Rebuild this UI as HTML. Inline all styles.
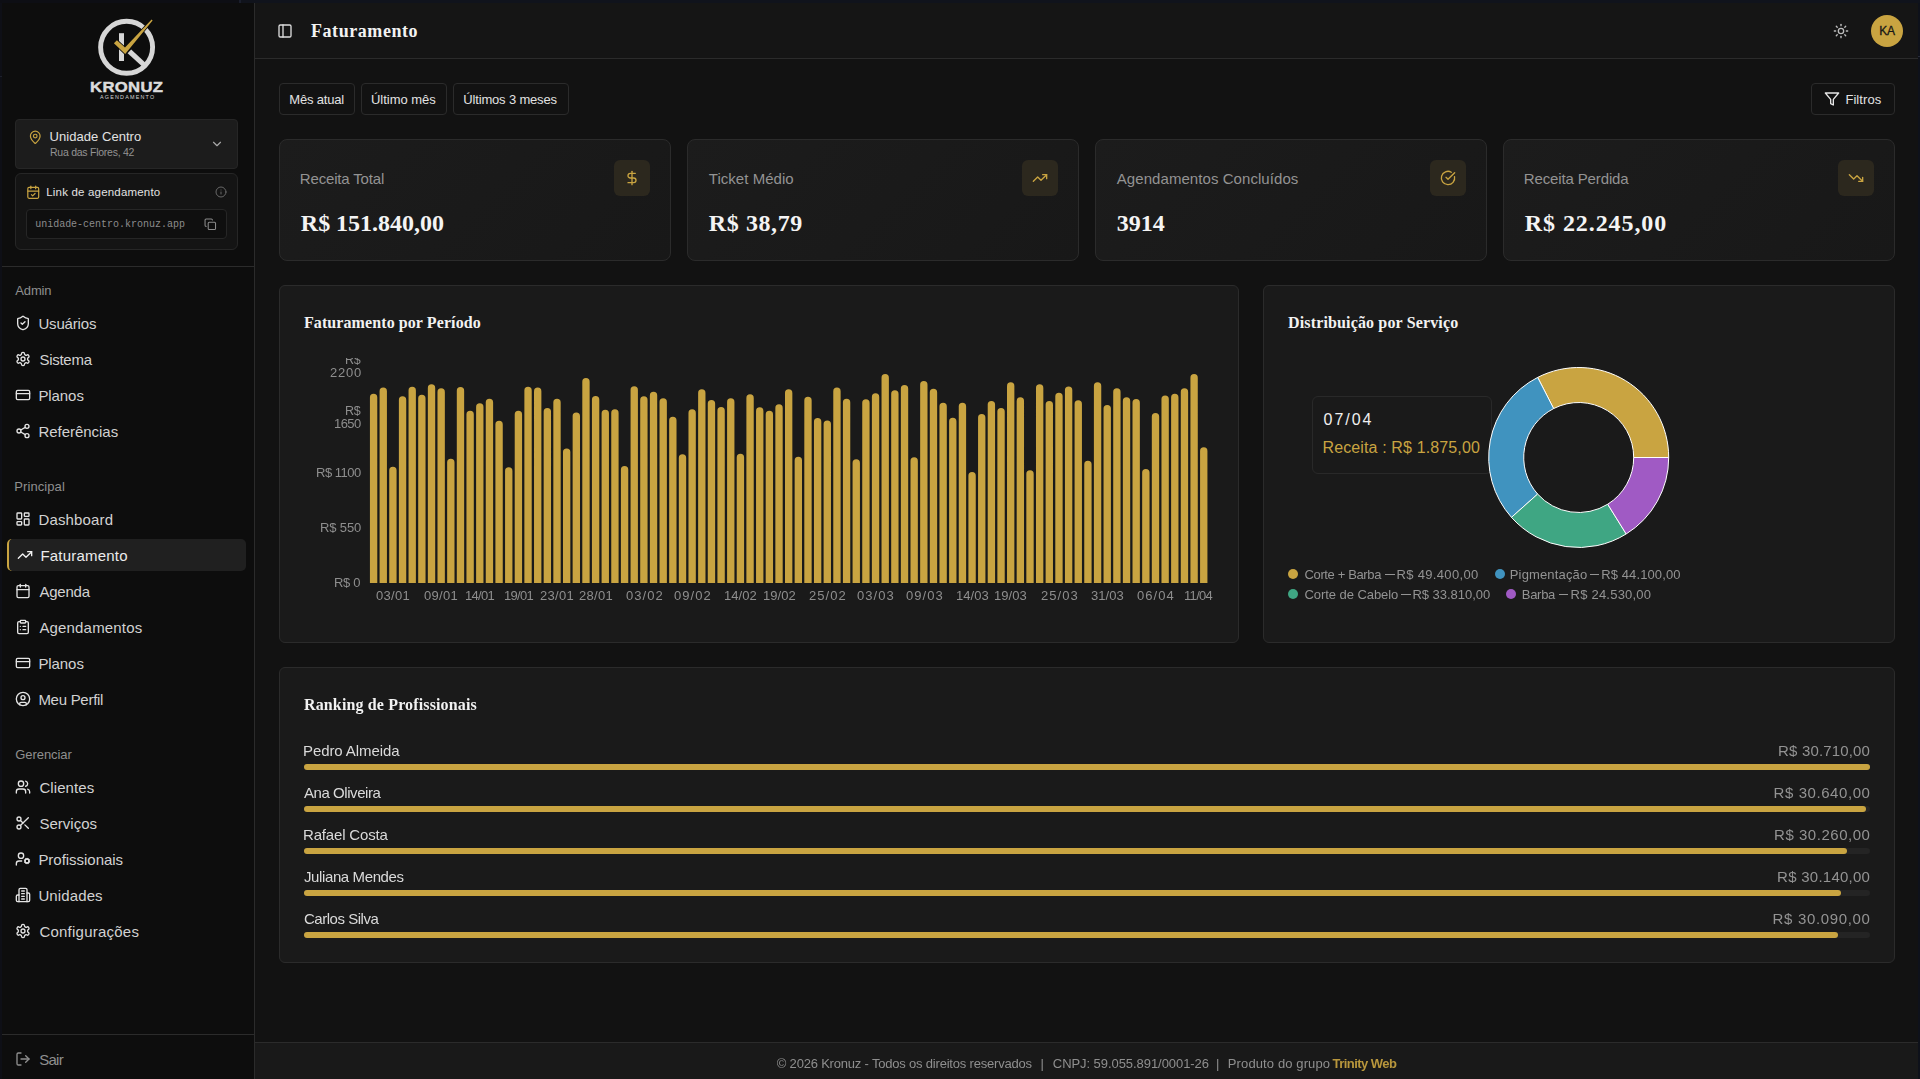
<!DOCTYPE html>
<html lang="pt-BR"><head><meta charset="utf-8"><title>Faturamento - Kronuz</title>
<style>
html,body{margin:0;padding:0;background:#0e0f16;}
body{width:1920px;height:1079px;position:relative;overflow:hidden;font-family:'Liberation Sans', sans-serif;}
.b{position:absolute;box-sizing:border-box;}
.t{position:absolute;white-space:pre;}
.i{position:absolute;overflow:visible;}
</style></head><body>
<div class="b" style="left:0px;top:0px;width:1920px;height:1079px;background:#0e0f16;"></div>
<div class="b" style="left:0px;top:0px;width:239px;height:3px;background:#0d0e14;"></div>
<div class="b" style="left:239px;top:0px;width:2px;height:3px;background:#1a1e2c;"></div>
<div class="b" style="left:241px;top:0px;width:1679px;height:3px;background:#10131c;"></div>
<div class="b" style="left:1918px;top:3px;width:2px;height:1076px;background:#0e111a;"></div>
<div class="b" style="left:2px;top:3px;width:252px;height:1076px;background:#0d0d0d;"></div>
<div class="b" style="left:254px;top:3px;width:1px;height:1076px;background:#2b2b2b;"></div>
<div class="b" style="left:255px;top:3px;width:1663px;height:1076px;background:#121212;"></div>
<div class="b" style="left:255px;top:3px;width:1663px;height:55px;background:#151515;"></div>
<div class="b" style="left:255px;top:58px;width:1663px;height:1px;background:#2b2b2b;"></div>
<div class="b" style="left:255px;top:1042px;width:1663px;height:1px;background:#2b2b2b;"></div>
<div class="b" style="left:255px;top:1043px;width:1663px;height:36px;background:#191919;"></div>
<div class="b" style="left:0px;top:76px;width:2px;height:1px;background:#1d202b;"></div>
<div class="b" style="left:1918px;top:56px;width:2px;height:1px;background:#272b3a;"></div>
<svg class="i" style="left:80px;top:10px" width="100" height="100" viewBox="80 10 100 100">
<circle cx="126.6" cy="47.3" r="26" fill="none" stroke="#d6d6d6" stroke-width="4.9"/>
<rect x="119" y="33.2" width="5" height="27.8" fill="#d6d6d6"/>
<path d="M127.6 53.2 L131.2 49.6 L146 63.2 L142.2 66.6 Z" fill="#d6d6d6"/>
<path d="M113.9 43.3 L116.9 40.2 L125 47.6 L151.6 19.6 L152.6 20.4 L125.2 54 Z" fill="#c9a441" stroke="#0d0d0d" stroke-width="1.6" paint-order="stroke" stroke-linejoin="miter"/>
</svg>
<div class="t" style="left:89.90px;top:79.77px;font:700 14.8px/14.8px 'Liberation Sans', sans-serif;color:#dcdcdc;letter-spacing:0.300px;-webkit-text-stroke:0.45px #dcdcdc;transform-origin:0 0;transform:scaleX(1.1274);">KRONUZ</div>
<div class="t" style="left:100.00px;top:94.53px;font:400 5.4px/5.4px 'Liberation Sans', sans-serif;color:#d4d4d4;letter-spacing:1.206px;">AGENDAMENTO</div>
<div class="b" style="left:15px;top:119px;width:223px;height:50px;background:#1c1c1c;border:1px solid #262626;border-radius:4px;"></div>
<svg class="i" style="left:27.55px;top:129.95px" width="14.5" height="14.5" viewBox="0 0 24 24" fill="none" stroke="#c9a441" stroke-width="2" stroke-linecap="round" stroke-linejoin="round"><path d="M20 10c0 4.993-5.539 10.193-7.399 11.799a1 1 0 0 1-1.202 0C9.539 20.193 4 14.993 4 10a8 8 0 0 1 16 0"/><circle cx="12" cy="10" r="3"/></svg>
<div class="t" style="left:49.60px;top:130.00px;font:400 13px/13px 'Liberation Sans', sans-serif;color:#e2e2e2;letter-spacing:0.044px;">Unidade Centro</div>
<div class="t" style="left:50.00px;top:147.11px;font:400 10.5px/10.5px 'Liberation Sans', sans-serif;color:#939393;letter-spacing:-0.251px;">Rua das Flores, 42</div>
<svg class="i" style="left:210.00px;top:137.00px" width="14" height="14" viewBox="0 0 24 24" fill="none" stroke="#a8a8a8" stroke-width="2" stroke-linecap="round" stroke-linejoin="round"><path d="m6 9 6 6 6-6"/></svg>
<div class="b" style="left:15px;top:173px;width:223px;height:77px;background:#141414;border:1px solid #262626;border-radius:6px;"></div>
<svg class="i" style="left:25.95px;top:185.05px" width="14.5" height="14.5" viewBox="0 0 24 24" fill="none" stroke="#c9a441" stroke-width="2" stroke-linecap="round" stroke-linejoin="round"><path d="M8 2v4"/><path d="M16 2v4"/><rect width="18" height="18" x="3" y="4" rx="2"/><path d="M3 10h18"/><path d="m9 16 2 2 4-4"/></svg>
<div class="t" style="left:46.30px;top:187.27px;font:400 11.5px/11.5px 'Liberation Sans', sans-serif;color:#e2e2e2;letter-spacing:0.182px;">Link de agendamento</div>
<svg class="i" style="left:215.00px;top:186.20px" width="12" height="12" viewBox="0 0 24 24" fill="none" stroke="#686868" stroke-width="2" stroke-linecap="round" stroke-linejoin="round"><circle cx="12" cy="12" r="10"/><path d="M12 16v-4"/><path d="M12 8h.01"/></svg>
<div class="b" style="left:26px;top:209px;width:201px;height:30px;background:#0f0f0f;border:1px solid #262626;border-radius:4px;"></div>
<div class="t" style="left:35.20px;top:219.74px;font:400 10px/10px 'Liberation Mono', monospace;color:#8c8c8c;letter-spacing:-0.013px;">unidade-centro.kronuz.app</div>
<svg class="i" style="left:203.90px;top:217.80px" width="12.6" height="12.6" viewBox="0 0 24 24" fill="none" stroke="#8c8c8c" stroke-width="2" stroke-linecap="round" stroke-linejoin="round"><rect width="14" height="14" x="8" y="8" rx="2" ry="2"/><path d="M4 16c-1.1 0-2-.9-2-2V4c0-1.1.9-2 2-2h10c1.1 0 2 .9 2 2"/></svg>
<div class="b" style="left:2px;top:266px;width:252px;height:1px;background:#2b2b2b;"></div>
<div class="t" style="left:15.30px;top:284.00px;font:400 13px/13px 'Liberation Sans', sans-serif;color:#8f8f8f;letter-spacing:-0.155px;">Admin</div>
<svg class="i" style="left:15.00px;top:315.00px" width="16" height="16" viewBox="0 0 24 24" fill="none" stroke="#e4e4e4" stroke-width="2" stroke-linecap="round" stroke-linejoin="round"><path d="M20 13c0 5-3.5 7.5-7.66 8.95a1 1 0 0 1-.67-.01C7.5 20.5 4 18 4 13V6a1 1 0 0 1 1-1c2 0 4.5-1.2 6.24-2.72a1.17 1.17 0 0 1 1.52 0C14.51 3.81 17 5 19 5a1 1 0 0 1 1 1z"/><path d="m9 12 2 2 4-4"/></svg>
<div class="t" style="left:38.40px;top:316.05px;font:400 15px/15px 'Liberation Sans', sans-serif;color:#d2d2d2;letter-spacing:-0.170px;">Usuários</div>
<svg class="i" style="left:15.00px;top:351.00px" width="16" height="16" viewBox="0 0 24 24" fill="none" stroke="#e4e4e4" stroke-width="2" stroke-linecap="round" stroke-linejoin="round"><path d="M12.22 2h-.44a2 2 0 0 0-2 2v.18a2 2 0 0 1-1 1.73l-.43.25a2 2 0 0 1-2 0l-.15-.08a2 2 0 0 0-2.73.73l-.22.38a2 2 0 0 0 .73 2.73l.15.1a2 2 0 0 1 1 1.72v.51a2 2 0 0 1-1 1.74l-.15.09a2 2 0 0 0-.73 2.73l.22.38a2 2 0 0 0 2.73.73l.15-.08a2 2 0 0 1 2 0l.43.25a2 2 0 0 1 1 1.73V20a2 2 0 0 0 2 2h.44a2 2 0 0 0 2-2v-.18a2 2 0 0 1 1-1.73l.43-.25a2 2 0 0 1 2 0l.15.08a2 2 0 0 0 2.73-.73l.22-.39a2 2 0 0 0-.73-2.73l-.15-.08a2 2 0 0 1-1-1.74v-.5a2 2 0 0 1 1-1.74l.15-.09a2 2 0 0 0 .73-2.73l-.22-.38a2 2 0 0 0-2.73-.73l-.15.08a2 2 0 0 1-2 0l-.43-.25a2 2 0 0 1-1-1.73V4a2 2 0 0 0-2-2z"/><circle cx="12" cy="12" r="3"/></svg>
<div class="t" style="left:39.40px;top:352.05px;font:400 15px/15px 'Liberation Sans', sans-serif;color:#d2d2d2;letter-spacing:-0.257px;">Sistema</div>
<svg class="i" style="left:15.00px;top:387.00px" width="16" height="16" viewBox="0 0 24 24" fill="none" stroke="#e4e4e4" stroke-width="2" stroke-linecap="round" stroke-linejoin="round"><rect width="20" height="14" x="2" y="5" rx="2"/><line x1="2" x2="22" y1="10" y2="10"/></svg>
<div class="t" style="left:38.40px;top:388.05px;font:400 15px/15px 'Liberation Sans', sans-serif;color:#d2d2d2;letter-spacing:-0.073px;">Planos</div>
<svg class="i" style="left:15.00px;top:423.00px" width="16" height="16" viewBox="0 0 24 24" fill="none" stroke="#e4e4e4" stroke-width="2" stroke-linecap="round" stroke-linejoin="round"><circle cx="18" cy="5" r="3"/><circle cx="6" cy="12" r="3"/><circle cx="18" cy="19" r="3"/><line x1="8.59" x2="15.42" y1="13.51" y2="17.49"/><line x1="15.41" x2="8.59" y1="6.51" y2="10.49"/></svg>
<div class="t" style="left:38.40px;top:424.05px;font:400 15px/15px 'Liberation Sans', sans-serif;color:#d2d2d2;letter-spacing:-0.024px;">Referências</div>
<div class="t" style="left:14.30px;top:480.00px;font:400 13px/13px 'Liberation Sans', sans-serif;color:#8f8f8f;letter-spacing:0.079px;">Principal</div>
<svg class="i" style="left:15.00px;top:511.00px" width="16" height="16" viewBox="0 0 24 24" fill="none" stroke="#e4e4e4" stroke-width="2" stroke-linecap="round" stroke-linejoin="round"><rect width="7" height="9" x="3" y="3" rx="1"/><rect width="7" height="5" x="14" y="3" rx="1"/><rect width="7" height="9" x="14" y="12" rx="1"/><rect width="7" height="5" x="3" y="16" rx="1"/></svg>
<div class="t" style="left:38.40px;top:512.05px;font:400 15px/15px 'Liberation Sans', sans-serif;color:#d2d2d2;letter-spacing:0.158px;">Dashboard</div>
<div class="b" style="left:7px;top:539.0px;width:239px;height:32.0px;background:#202020;border-radius:5px;border-left:2px solid #c9a441;"></div>
<svg class="i" style="left:17.00px;top:547.00px" width="16" height="16" viewBox="0 0 24 24" fill="none" stroke="#f2f2f2" stroke-width="2" stroke-linecap="round" stroke-linejoin="round"><polyline points="22 7 13.5 15.5 8.5 10.5 2 17"/><polyline points="16 7 22 7 22 13"/></svg>
<div class="t" style="left:40.40px;top:548.05px;font:400 15px/15px 'Liberation Sans', sans-serif;color:#ececec;letter-spacing:0.210px;">Faturamento</div>
<svg class="i" style="left:15.00px;top:583.00px" width="16" height="16" viewBox="0 0 24 24" fill="none" stroke="#e4e4e4" stroke-width="2" stroke-linecap="round" stroke-linejoin="round"><path d="M8 2v4"/><path d="M16 2v4"/><rect width="18" height="18" x="3" y="4" rx="2"/><path d="M3 10h18"/></svg>
<div class="t" style="left:39.40px;top:584.05px;font:400 15px/15px 'Liberation Sans', sans-serif;color:#d2d2d2;letter-spacing:-0.215px;">Agenda</div>
<svg class="i" style="left:15.00px;top:619.00px" width="16" height="16" viewBox="0 0 24 24" fill="none" stroke="#e4e4e4" stroke-width="2" stroke-linecap="round" stroke-linejoin="round"><rect width="8" height="4" x="8" y="2" rx="1" ry="1"/><path d="M16 4h2a2 2 0 0 1 2 2v14a2 2 0 0 1-2 2H6a2 2 0 0 1-2-2V6a2 2 0 0 1 2-2h2"/><path d="M12 11h4"/><path d="M12 16h4"/><path d="M8 11h.01"/><path d="M8 16h.01"/></svg>
<div class="t" style="left:39.40px;top:620.05px;font:400 15px/15px 'Liberation Sans', sans-serif;color:#d2d2d2;letter-spacing:0.172px;">Agendamentos</div>
<svg class="i" style="left:15.00px;top:655.00px" width="16" height="16" viewBox="0 0 24 24" fill="none" stroke="#e4e4e4" stroke-width="2" stroke-linecap="round" stroke-linejoin="round"><rect width="20" height="14" x="2" y="5" rx="2"/><line x1="2" x2="22" y1="10" y2="10"/></svg>
<div class="t" style="left:38.40px;top:656.05px;font:400 15px/15px 'Liberation Sans', sans-serif;color:#d2d2d2;letter-spacing:-0.073px;">Planos</div>
<svg class="i" style="left:15.00px;top:691.00px" width="16" height="16" viewBox="0 0 24 24" fill="none" stroke="#e4e4e4" stroke-width="2" stroke-linecap="round" stroke-linejoin="round"><circle cx="12" cy="12" r="10"/><circle cx="12" cy="10" r="3"/><path d="M7 20.662V19a2 2 0 0 1 2-2h6a2 2 0 0 1 2 2v1.662"/></svg>
<div class="t" style="left:38.40px;top:692.05px;font:400 15px/15px 'Liberation Sans', sans-serif;color:#d2d2d2;letter-spacing:-0.277px;">Meu Perfil</div>
<div class="t" style="left:15.30px;top:748.00px;font:400 13px/13px 'Liberation Sans', sans-serif;color:#8f8f8f;letter-spacing:-0.069px;">Gerenciar</div>
<svg class="i" style="left:15.00px;top:779.00px" width="16" height="16" viewBox="0 0 24 24" fill="none" stroke="#e4e4e4" stroke-width="2" stroke-linecap="round" stroke-linejoin="round"><path d="M16 21v-2a4 4 0 0 0-4-4H6a4 4 0 0 0-4 4v2"/><circle cx="9" cy="7" r="4"/><path d="M22 21v-2a4 4 0 0 0-3-3.87"/><path d="M16 3.13a4 4 0 0 1 0 7.75"/></svg>
<div class="t" style="left:39.40px;top:780.05px;font:400 15px/15px 'Liberation Sans', sans-serif;color:#d2d2d2;letter-spacing:0.087px;">Clientes</div>
<svg class="i" style="left:15.00px;top:815.00px" width="16" height="16" viewBox="0 0 24 24" fill="none" stroke="#e4e4e4" stroke-width="2" stroke-linecap="round" stroke-linejoin="round"><circle cx="6" cy="6" r="3"/><path d="M8.12 8.12 12 12"/><path d="M20 4 8.12 15.88"/><circle cx="6" cy="18" r="3"/><path d="M14.8 14.8 20 20"/></svg>
<div class="t" style="left:39.40px;top:816.05px;font:400 15px/15px 'Liberation Sans', sans-serif;color:#d2d2d2;letter-spacing:0.012px;">Serviços</div>
<svg class="i" style="left:15.00px;top:851.00px" width="16" height="16" viewBox="0 0 24 24" fill="none" stroke="#e4e4e4" stroke-width="2" stroke-linecap="round" stroke-linejoin="round"><circle cx="18" cy="15" r="3"/><circle cx="9" cy="7" r="4"/><path d="M10 15H6a4 4 0 0 0-4 4v2"/><path d="m21.7 16.4-.9-.3"/><path d="m15.2 13.9-.9-.3"/><path d="m16.6 18.7.3-.9"/><path d="m19.1 12.2.3-.9"/><path d="m19.6 18.7-.4-1"/><path d="m16.8 12.3-.4-1"/><path d="m14.3 16.6 1-.4"/><path d="m20.7 13.8 1-.4"/></svg>
<div class="t" style="left:38.40px;top:852.05px;font:400 15px/15px 'Liberation Sans', sans-serif;color:#d2d2d2;letter-spacing:-0.028px;">Profissionais</div>
<svg class="i" style="left:15.00px;top:887.00px" width="16" height="16" viewBox="0 0 24 24" fill="none" stroke="#e4e4e4" stroke-width="2" stroke-linecap="round" stroke-linejoin="round"><path d="M6 22V4a2 2 0 0 1 2-2h8a2 2 0 0 1 2 2v18Z"/><path d="M6 12H4a2 2 0 0 0-2 2v6a2 2 0 0 0 2 2h2"/><path d="M18 9h2a2 2 0 0 1 2 2v9a2 2 0 0 1-2 2h-2"/><path d="M10 6h4"/><path d="M10 10h4"/><path d="M10 14h4"/><path d="M10 18h4"/></svg>
<div class="t" style="left:38.40px;top:888.05px;font:400 15px/15px 'Liberation Sans', sans-serif;color:#d2d2d2;letter-spacing:0.118px;">Unidades</div>
<svg class="i" style="left:15.00px;top:923.00px" width="16" height="16" viewBox="0 0 24 24" fill="none" stroke="#e4e4e4" stroke-width="2" stroke-linecap="round" stroke-linejoin="round"><path d="M12.22 2h-.44a2 2 0 0 0-2 2v.18a2 2 0 0 1-1 1.73l-.43.25a2 2 0 0 1-2 0l-.15-.08a2 2 0 0 0-2.73.73l-.22.38a2 2 0 0 0 .73 2.73l.15.1a2 2 0 0 1 1 1.72v.51a2 2 0 0 1-1 1.74l-.15.09a2 2 0 0 0-.73 2.73l.22.38a2 2 0 0 0 2.73.73l.15-.08a2 2 0 0 1 2 0l.43.25a2 2 0 0 1 1 1.73V20a2 2 0 0 0 2 2h.44a2 2 0 0 0 2-2v-.18a2 2 0 0 1 1-1.73l.43-.25a2 2 0 0 1 2 0l.15.08a2 2 0 0 0 2.73-.73l.22-.39a2 2 0 0 0-.73-2.73l-.15-.08a2 2 0 0 1-1-1.74v-.5a2 2 0 0 1 1-1.74l.15-.09a2 2 0 0 0 .73-2.73l-.22-.38a2 2 0 0 0-2.73-.73l-.15.08a2 2 0 0 1-2 0l-.43-.25a2 2 0 0 1-1-1.73V4a2 2 0 0 0-2-2z"/><circle cx="12" cy="12" r="3"/></svg>
<div class="t" style="left:39.40px;top:924.05px;font:400 15px/15px 'Liberation Sans', sans-serif;color:#d2d2d2;letter-spacing:0.231px;">Configurações</div>
<div class="b" style="left:2px;top:1034px;width:252px;height:1px;background:#2b2b2b;"></div>
<svg class="i" style="left:15.00px;top:1051.00px" width="16" height="16" viewBox="0 0 24 24" fill="none" stroke="#8f8f8f" stroke-width="2" stroke-linecap="round" stroke-linejoin="round"><path d="M9 21H5a2 2 0 0 1-2-2V5a2 2 0 0 1 2-2h4"/><polyline points="16 17 21 12 16 7"/><line x1="21" x2="9" y1="12" y2="12"/></svg>
<div class="t" style="left:39.30px;top:1051.60px;font:400 15px/15px 'Liberation Sans', sans-serif;color:#8f8f8f;letter-spacing:-0.760px;">Sair</div>
<svg class="i" style="left:277.00px;top:23.00px" width="16" height="16" viewBox="0 0 24 24" fill="none" stroke="#dddddd" stroke-width="2" stroke-linecap="round" stroke-linejoin="round"><rect width="18" height="18" x="3" y="3" rx="2"/><path d="M9 3v18"/></svg>
<div class="t" style="left:311.00px;top:21.72px;font:700 18px/18px 'Liberation Serif', serif;color:#f2f2f2;letter-spacing:0.562px;">Faturamento</div>
<svg class="i" style="left:1833.00px;top:23.00px" width="16" height="16" viewBox="0 0 24 24" fill="none" stroke="#bdbdbd" stroke-width="2" stroke-linecap="round" stroke-linejoin="round"><circle cx="12" cy="12" r="4"/><path d="M12 2v2"/><path d="M12 20v2"/><path d="m4.93 4.93 1.41 1.41"/><path d="m17.66 17.66 1.41 1.41"/><path d="M2 12h2"/><path d="M20 12h2"/><path d="m6.34 17.66-1.41 1.41"/><path d="m19.07 4.93-1.41 1.41"/></svg>
<div class="b" style="left:1871px;top:15px;width:32px;height:32px;border-radius:50%;background:#c9a441"></div>
<div class="t" style="left:1879.20px;top:24.74px;font:400 12px/12px 'Liberation Sans', sans-serif;color:#161616;letter-spacing:-0.204px;-webkit-text-stroke:0.3px #161616;">KA</div>
<div class="b" style="left:279px;top:83px;width:76px;height:32px;background:#121212;border:1px solid #2b2b2b;border-radius:4px;"></div>
<div class="t" style="left:289.30px;top:93.00px;font:400 13px/13px 'Liberation Sans', sans-serif;color:#e2e2e2;letter-spacing:-0.184px;">Mês atual</div>
<div class="b" style="left:361px;top:83px;width:86px;height:32px;background:#121212;border:1px solid #2b2b2b;border-radius:4px;"></div>
<div class="t" style="left:371.00px;top:93.00px;font:400 13px/13px 'Liberation Sans', sans-serif;color:#e2e2e2;letter-spacing:-0.023px;">Último mês</div>
<div class="b" style="left:453px;top:83px;width:116px;height:32px;background:#121212;border:1px solid #2b2b2b;border-radius:4px;"></div>
<div class="t" style="left:463.30px;top:93.00px;font:400 13px/13px 'Liberation Sans', sans-serif;color:#e2e2e2;letter-spacing:-0.170px;">Últimos 3 meses</div>
<div class="b" style="left:1811px;top:83px;width:84px;height:32px;background:#121212;border:1px solid #2b2b2b;border-radius:4px;"></div>
<svg class="i" style="left:1824.00px;top:91.00px" width="16" height="16" viewBox="0 0 24 24" fill="none" stroke="#e8e8e8" stroke-width="2" stroke-linecap="round" stroke-linejoin="round"><polygon points="22 3 2 3 10 12.46 10 19 14 21 14 12.46 22 3"/></svg>
<div class="t" style="left:1845.40px;top:93.00px;font:400 13px/13px 'Liberation Sans', sans-serif;color:#e2e2e2;letter-spacing:0.069px;">Filtros</div>
<div class="b" style="left:279px;top:139px;width:392px;height:122px;background:linear-gradient(135deg,#1c1c1c 0%,#181818 100%);border:1px solid #2b2b2b;border-radius:8px;"></div>
<div class="t" style="left:299.80px;top:170.80px;font:400 15px/15px 'Liberation Sans', sans-serif;color:#939393;letter-spacing:-0.165px;">Receita Total</div>
<div class="t" style="left:300.80px;top:211.20px;font:700 24px/24px 'Liberation Serif', serif;color:#f4f4f4;letter-spacing:-0.003px;">R$ 151.840,00</div>
<div class="b" style="left:614px;top:160px;width:36px;height:36px;background:#2c281e;border-radius:6px;"></div>
<svg class="i" style="left:624.00px;top:170.00px" width="16" height="16" viewBox="0 0 24 24" fill="none" stroke="#c9a441" stroke-width="2" stroke-linecap="round" stroke-linejoin="round"><line x1="12" x2="12" y1="2" y2="22"/><path d="M17 5H9.5a3.5 3.5 0 0 0 0 7h5a3.5 3.5 0 0 1 0 7H6"/></svg>
<div class="b" style="left:687px;top:139px;width:392px;height:122px;background:linear-gradient(135deg,#1c1c1c 0%,#181818 100%);border:1px solid #2b2b2b;border-radius:8px;"></div>
<div class="t" style="left:708.80px;top:170.80px;font:400 15px/15px 'Liberation Sans', sans-serif;color:#939393;letter-spacing:0.034px;">Ticket Médio</div>
<div class="t" style="left:708.80px;top:211.20px;font:700 24px/24px 'Liberation Serif', serif;color:#f4f4f4;letter-spacing:0.595px;">R$ 38,79</div>
<div class="b" style="left:1022px;top:160px;width:36px;height:36px;background:#2c281e;border-radius:6px;"></div>
<svg class="i" style="left:1032.00px;top:170.00px" width="16" height="16" viewBox="0 0 24 24" fill="none" stroke="#c9a441" stroke-width="2" stroke-linecap="round" stroke-linejoin="round"><polyline points="22 7 13.5 15.5 8.5 10.5 2 17"/><polyline points="16 7 22 7 22 13"/></svg>
<div class="b" style="left:1095px;top:139px;width:392px;height:122px;background:linear-gradient(135deg,#1c1c1c 0%,#181818 100%);border:1px solid #2b2b2b;border-radius:8px;"></div>
<div class="t" style="left:1116.80px;top:170.80px;font:400 15px/15px 'Liberation Sans', sans-serif;color:#939393;letter-spacing:0.063px;">Agendamentos Concluídos</div>
<div class="t" style="left:1116.80px;top:211.20px;font:700 24px/24px 'Liberation Serif', serif;color:#f4f4f4;letter-spacing:0.000px;">3914</div>
<div class="b" style="left:1430px;top:160px;width:36px;height:36px;background:#2c281e;border-radius:6px;"></div>
<svg class="i" style="left:1440.00px;top:170.00px" width="16" height="16" viewBox="0 0 24 24" fill="none" stroke="#c9a441" stroke-width="2" stroke-linecap="round" stroke-linejoin="round"><path d="M21.801 10A10 10 0 1 1 17 3.335"/><path d="m9 11 3 3L22 4"/></svg>
<div class="b" style="left:1503px;top:139px;width:392px;height:122px;background:linear-gradient(135deg,#1c1c1c 0%,#181818 100%);border:1px solid #2b2b2b;border-radius:8px;"></div>
<div class="t" style="left:1523.80px;top:170.80px;font:400 15px/15px 'Liberation Sans', sans-serif;color:#939393;letter-spacing:-0.135px;">Receita Perdida</div>
<div class="t" style="left:1524.80px;top:211.20px;font:700 24px/24px 'Liberation Serif', serif;color:#f4f4f4;letter-spacing:0.924px;">R$ 22.245,00</div>
<div class="b" style="left:1838px;top:160px;width:36px;height:36px;background:#2c281e;border-radius:6px;"></div>
<svg class="i" style="left:1848.00px;top:170.00px" width="16" height="16" viewBox="0 0 24 24" fill="none" stroke="#c9a441" stroke-width="2" stroke-linecap="round" stroke-linejoin="round"><polyline points="22 17 13.5 8.5 8.5 13.5 2 7"/><polyline points="16 17 22 17 22 11"/></svg>
<div class="b" style="left:279px;top:285px;width:960px;height:358px;background:#1a1a1a;border:1px solid #2b2b2b;border-radius:6px;"></div>
<div class="t" style="left:304.00px;top:314.60px;font:700 16px/16px 'Liberation Serif', serif;color:#f2f2f2;letter-spacing:0.087px;">Faturamento por Período</div>
<svg class="i" style="left:0;top:0" width="1920" height="1079" viewBox="0 0 1920 1079"><path fill="#c9a441" d="M369.93 583V397.38a3.67 3.67 0 0 1 7.35 0V583ZM379.58 583V391.28a3.67 3.67 0 0 1 7.35 0V583ZM389.23 583V470.38a3.67 3.67 0 0 1 7.35 0V583ZM398.88 583V399.88a3.67 3.67 0 0 1 7.35 0V583ZM408.54 583V390.38a3.67 3.67 0 0 1 7.35 0V583ZM418.19 583V398.38a3.67 3.67 0 0 1 7.35 0V583ZM427.84 583V387.88a3.67 3.67 0 0 1 7.35 0V583ZM437.50 583V391.88a3.67 3.67 0 0 1 7.35 0V583ZM447.15 583V462.48a3.67 3.67 0 0 1 7.35 0V583ZM456.80 583V390.78a3.67 3.67 0 0 1 7.35 0V583ZM466.45 583V414.48a3.67 3.67 0 0 1 7.35 0V583ZM476.11 583V406.88a3.67 3.67 0 0 1 7.35 0V583ZM485.76 583V402.48a3.67 3.67 0 0 1 7.35 0V583ZM495.41 583V424.38a3.67 3.67 0 0 1 7.35 0V583ZM505.07 583V470.88a3.67 3.67 0 0 1 7.35 0V583ZM514.72 583V414.48a3.67 3.67 0 0 1 7.35 0V583ZM524.37 583V390.38a3.67 3.67 0 0 1 7.35 0V583ZM534.03 583V391.28a3.67 3.67 0 0 1 7.35 0V583ZM543.68 583V411.57a3.67 3.67 0 0 1 7.35 0V583ZM553.33 583V402.48a3.67 3.67 0 0 1 7.35 0V583ZM562.99 583V452.07a3.67 3.67 0 0 1 7.35 0V583ZM572.64 583V416.07a3.67 3.67 0 0 1 7.35 0V583ZM582.29 583V381.78a3.67 3.67 0 0 1 7.35 0V583ZM591.94 583V399.57a3.67 3.67 0 0 1 7.35 0V583ZM601.60 583V413.48a3.67 3.67 0 0 1 7.35 0V583ZM611.25 583V412.88a3.67 3.67 0 0 1 7.35 0V583ZM620.90 583V469.78a3.67 3.67 0 0 1 7.35 0V583ZM630.56 583V389.88a3.67 3.67 0 0 1 7.35 0V583ZM640.21 583V399.88a3.67 3.67 0 0 1 7.35 0V583ZM649.86 583V395.38a3.67 3.67 0 0 1 7.35 0V583ZM659.52 583V401.88a3.67 3.67 0 0 1 7.35 0V583ZM669.17 583V420.48a3.67 3.67 0 0 1 7.35 0V583ZM678.82 583V457.88a3.67 3.67 0 0 1 7.35 0V583ZM688.47 583V412.88a3.67 3.67 0 0 1 7.35 0V583ZM698.13 583V392.88a3.67 3.67 0 0 1 7.35 0V583ZM707.78 583V403.57a3.67 3.67 0 0 1 7.35 0V583ZM717.43 583V410.78a3.67 3.67 0 0 1 7.35 0V583ZM727.09 583V401.88a3.67 3.67 0 0 1 7.35 0V583ZM736.74 583V457.48a3.67 3.67 0 0 1 7.35 0V583ZM746.39 583V397.88a3.67 3.67 0 0 1 7.35 0V583ZM756.05 583V410.98a3.67 3.67 0 0 1 7.35 0V583ZM765.70 583V414.48a3.67 3.67 0 0 1 7.35 0V583ZM775.35 583V407.98a3.67 3.67 0 0 1 7.35 0V583ZM785.00 583V392.88a3.67 3.67 0 0 1 7.35 0V583ZM794.66 583V460.38a3.67 3.67 0 0 1 7.35 0V583ZM804.31 583V400.38a3.67 3.67 0 0 1 7.35 0V583ZM813.96 583V421.78a3.67 3.67 0 0 1 7.35 0V583ZM823.62 583V424.07a3.67 3.67 0 0 1 7.35 0V583ZM833.27 583V391.28a3.67 3.67 0 0 1 7.35 0V583ZM842.92 583V402.48a3.67 3.67 0 0 1 7.35 0V583ZM852.58 583V462.88a3.67 3.67 0 0 1 7.35 0V583ZM862.23 583V402.88a3.67 3.67 0 0 1 7.35 0V583ZM871.88 583V396.88a3.67 3.67 0 0 1 7.35 0V583ZM881.53 583V377.78a3.67 3.67 0 0 1 7.35 0V583ZM891.19 583V393.98a3.67 3.67 0 0 1 7.35 0V583ZM900.84 583V388.68a3.67 3.67 0 0 1 7.35 0V583ZM910.49 583V460.88a3.67 3.67 0 0 1 7.35 0V583ZM920.15 583V384.78a3.67 3.67 0 0 1 7.35 0V583ZM929.80 583V392.38a3.67 3.67 0 0 1 7.35 0V583ZM939.45 583V406.38a3.67 3.67 0 0 1 7.35 0V583ZM949.11 583V421.38a3.67 3.67 0 0 1 7.35 0V583ZM958.76 583V406.38a3.67 3.67 0 0 1 7.35 0V583ZM968.41 583V475.68a3.67 3.67 0 0 1 7.35 0V583ZM978.06 583V417.68a3.67 3.67 0 0 1 7.35 0V583ZM987.72 583V404.57a3.67 3.67 0 0 1 7.35 0V583ZM997.37 583V411.57a3.67 3.67 0 0 1 7.35 0V583ZM1007.02 583V385.98a3.67 3.67 0 0 1 7.35 0V583ZM1016.68 583V400.98a3.67 3.67 0 0 1 7.35 0V583ZM1026.33 583V473.98a3.67 3.67 0 0 1 7.35 0V583ZM1035.98 583V387.98a3.67 3.67 0 0 1 7.35 0V583ZM1045.63 583V404.68a3.67 3.67 0 0 1 7.35 0V583ZM1055.29 583V396.48a3.67 3.67 0 0 1 7.35 0V583ZM1064.94 583V390.07a3.67 3.67 0 0 1 7.35 0V583ZM1074.59 583V403.98a3.67 3.67 0 0 1 7.35 0V583ZM1084.25 583V464.48a3.67 3.67 0 0 1 7.35 0V583ZM1093.90 583V385.98a3.67 3.67 0 0 1 7.35 0V583ZM1103.55 583V408.57a3.67 3.67 0 0 1 7.35 0V583ZM1113.21 583V391.88a3.67 3.67 0 0 1 7.35 0V583ZM1122.86 583V400.98a3.67 3.67 0 0 1 7.35 0V583ZM1132.51 583V402.68a3.67 3.67 0 0 1 7.35 0V583ZM1142.17 583V472.57a3.67 3.67 0 0 1 7.35 0V583ZM1151.82 583V416.57a3.67 3.67 0 0 1 7.35 0V583ZM1161.47 583V399.07a3.67 3.67 0 0 1 7.35 0V583ZM1171.12 583V397.38a3.67 3.67 0 0 1 7.35 0V583ZM1180.78 583V391.88a3.67 3.67 0 0 1 7.35 0V583ZM1190.43 583V377.78a3.67 3.67 0 0 1 7.35 0V583ZM1200.08 583V450.88a3.67 3.67 0 0 1 7.35 0V583Z"/></svg>
<div class="t" style="left:334.20px;top:575.70px;font:400 13px/13px 'Liberation Sans', sans-serif;color:#8e8e8e;letter-spacing:-0.310px;will-change:transform;">R$ 0</div>
<div class="t" style="left:319.50px;top:520.70px;font:400 13px/13px 'Liberation Sans', sans-serif;color:#8e8e8e;letter-spacing:-0.138px;will-change:transform;">R$ 550</div>
<div class="t" style="left:315.50px;top:465.70px;font:400 13px/13px 'Liberation Sans', sans-serif;color:#8e8e8e;letter-spacing:-0.493px;will-change:transform;">R$ 1100</div>
<div class="t" style="left:344.70px;top:405.02px;font:400 12.5px/12.5px 'Liberation Sans', sans-serif;color:#8e8e8e;letter-spacing:-0.227px;will-change:transform;">R$</div>
<div class="t" style="left:333.50px;top:416.60px;font:400 13px/13px 'Liberation Sans', sans-serif;color:#8e8e8e;letter-spacing:-0.563px;will-change:transform;">1650</div>
<div class="t" style="left:344.70px;top:354.42px;font:400 12.5px/12.5px 'Liberation Sans', sans-serif;color:#8e8e8e;letter-spacing:-0.227px;clip-path:inset(4.5px 0 0 0);will-change:transform;">R$</div>
<div class="t" style="left:329.50px;top:365.70px;font:400 13px/13px 'Liberation Sans', sans-serif;color:#8e8e8e;letter-spacing:0.770px;will-change:transform;">2200</div>
<div class="t" style="left:376.21px;top:588.50px;font:400 13px/13px 'Liberation Sans', sans-serif;color:#8e8e8e;letter-spacing:0.275px;will-change:transform;">03/01</div>
<div class="t" style="left:424.47px;top:588.50px;font:400 13px/13px 'Liberation Sans', sans-serif;color:#8e8e8e;letter-spacing:0.275px;will-change:transform;">09/01</div>
<div class="t" style="left:465.08px;top:588.50px;font:400 13px/13px 'Liberation Sans', sans-serif;color:#8e8e8e;letter-spacing:-0.725px;will-change:transform;">14/01</div>
<div class="t" style="left:503.69px;top:588.50px;font:400 13px/13px 'Liberation Sans', sans-serif;color:#8e8e8e;letter-spacing:-0.725px;will-change:transform;">19/01</div>
<div class="t" style="left:540.31px;top:588.50px;font:400 13px/13px 'Liberation Sans', sans-serif;color:#8e8e8e;letter-spacing:0.275px;will-change:transform;">23/01</div>
<div class="t" style="left:578.92px;top:588.50px;font:400 13px/13px 'Liberation Sans', sans-serif;color:#8e8e8e;letter-spacing:0.275px;will-change:transform;">28/01</div>
<div class="t" style="left:625.58px;top:588.50px;font:400 13px/13px 'Liberation Sans', sans-serif;color:#8e8e8e;letter-spacing:1.075px;will-change:transform;">03/02</div>
<div class="t" style="left:673.85px;top:588.50px;font:400 13px/13px 'Liberation Sans', sans-serif;color:#8e8e8e;letter-spacing:1.075px;will-change:transform;">09/02</div>
<div class="t" style="left:724.11px;top:588.50px;font:400 13px/13px 'Liberation Sans', sans-serif;color:#8e8e8e;letter-spacing:0.075px;will-change:transform;">14/02</div>
<div class="t" style="left:762.73px;top:588.50px;font:400 13px/13px 'Liberation Sans', sans-serif;color:#8e8e8e;letter-spacing:0.075px;will-change:transform;">19/02</div>
<div class="t" style="left:808.99px;top:588.50px;font:400 13px/13px 'Liberation Sans', sans-serif;color:#8e8e8e;letter-spacing:1.075px;will-change:transform;">25/02</div>
<div class="t" style="left:857.26px;top:588.50px;font:400 13px/13px 'Liberation Sans', sans-serif;color:#8e8e8e;letter-spacing:1.075px;will-change:transform;">03/03</div>
<div class="t" style="left:905.52px;top:588.50px;font:400 13px/13px 'Liberation Sans', sans-serif;color:#8e8e8e;letter-spacing:1.075px;will-change:transform;">09/03</div>
<div class="t" style="left:955.79px;top:588.50px;font:400 13px/13px 'Liberation Sans', sans-serif;color:#8e8e8e;letter-spacing:0.075px;will-change:transform;">14/03</div>
<div class="t" style="left:994.40px;top:588.50px;font:400 13px/13px 'Liberation Sans', sans-serif;color:#8e8e8e;letter-spacing:0.075px;will-change:transform;">19/03</div>
<div class="t" style="left:1040.66px;top:588.50px;font:400 13px/13px 'Liberation Sans', sans-serif;color:#8e8e8e;letter-spacing:1.075px;will-change:transform;">25/03</div>
<div class="t" style="left:1090.93px;top:588.50px;font:400 13px/13px 'Liberation Sans', sans-serif;color:#8e8e8e;letter-spacing:0.075px;will-change:transform;">31/03</div>
<div class="t" style="left:1137.19px;top:588.50px;font:400 13px/13px 'Liberation Sans', sans-serif;color:#8e8e8e;letter-spacing:1.075px;will-change:transform;">06/04</div>
<div class="t" style="left:1184.20px;top:588.50px;font:400 13px/13px 'Liberation Sans', sans-serif;color:#8e8e8e;letter-spacing:-0.684px;will-change:transform;">11/04</div>
<div class="b" style="left:1263px;top:285px;width:632px;height:358px;background:#1a1a1a;border:1px solid #2b2b2b;border-radius:6px;"></div>
<div class="t" style="left:1288.00px;top:314.60px;font:700 16px/16px 'Liberation Serif', serif;color:#f2f2f2;letter-spacing:0.148px;">Distribuição por Serviço</div>
<div class="b" style="left:1312px;top:396px;width:180px;height:78px;background:#1a1a1a;border:1px solid #292929;border-radius:6px;"></div>
<div class="t" style="left:1323.50px;top:412.46px;font:400 16px/16px 'Liberation Sans', sans-serif;color:#f0f0f0;letter-spacing:1.990px;">07/04</div>
<div class="t" style="left:1322.50px;top:440.46px;font:400 16px/16px 'Liberation Sans', sans-serif;color:#c9a441;letter-spacing:0.127px;">Receita : R$ 1.875,00</div>
<svg class="i" style="left:0;top:0" width="1920" height="1079" viewBox="0 0 1920 1079"><path d="M1668.70 457.50A90 90 0 0 0 1537.67 377.40L1553.63 408.55A55 55 0 0 1 1633.70 457.50Z" fill="#c9a441" stroke="#fff" stroke-width="1"/><path d="M1537.67 377.40A90 90 0 0 0 1511.48 517.35L1537.62 494.07A55 55 0 0 1 1553.63 408.55Z" fill="#4093bf" stroke="#fff" stroke-width="1"/><path d="M1511.48 517.35A90 90 0 0 0 1626.18 533.96L1607.72 504.22A55 55 0 0 1 1537.62 494.07Z" fill="#3fa683" stroke="#fff" stroke-width="1"/><path d="M1626.18 533.96A90 90 0 0 0 1668.70 457.50L1633.70 457.50A55 55 0 0 1 1607.72 504.22Z" fill="#a05ac4" stroke="#fff" stroke-width="1"/></svg>
<div class="b" style="left:1288px;top:569px;width:10px;height:10px;border-radius:50%;background:#c9a441"></div>
<div class="t" style="left:1304.50px;top:567.60px;font:400 13px/13px 'Liberation Sans', sans-serif;color:#939393;letter-spacing:-0.364px;">Corte + Barba</div>
<div class="b" style="left:1385px;top:574px;width:9.5px;height:1px;background:#939393;"></div>
<div class="t" style="left:1396.50px;top:567.60px;font:400 13px/13px 'Liberation Sans', sans-serif;color:#939393;letter-spacing:0.333px;">R$ 49.400,00</div>
<div class="b" style="left:1495px;top:569px;width:10px;height:10px;border-radius:50%;background:#4093bf"></div>
<div class="t" style="left:1509.80px;top:567.60px;font:400 13px/13px 'Liberation Sans', sans-serif;color:#939393;letter-spacing:0.145px;">Pigmentação</div>
<div class="b" style="left:1590px;top:574px;width:9.200000000000045px;height:1px;background:#939393;"></div>
<div class="t" style="left:1601.20px;top:567.60px;font:400 13px/13px 'Liberation Sans', sans-serif;color:#939393;letter-spacing:0.115px;">R$ 44.100,00</div>
<div class="b" style="left:1288px;top:589px;width:10px;height:10px;border-radius:50%;background:#3fa683"></div>
<div class="t" style="left:1304.50px;top:587.60px;font:400 13px/13px 'Liberation Sans', sans-serif;color:#939393;letter-spacing:-0.060px;">Corte de Cabelo</div>
<div class="b" style="left:1401px;top:594px;width:9.5px;height:1px;background:#939393;"></div>
<div class="t" style="left:1412.40px;top:587.60px;font:400 13px/13px 'Liberation Sans', sans-serif;color:#939393;letter-spacing:-0.021px;">R$ 33.810,00</div>
<div class="b" style="left:1506.2px;top:589px;width:10px;height:10px;border-radius:50%;background:#a05ac4"></div>
<div class="t" style="left:1521.80px;top:587.60px;font:400 13px/13px 'Liberation Sans', sans-serif;color:#939393;letter-spacing:-0.290px;">Barba</div>
<div class="b" style="left:1558.9px;top:594px;width:9.5px;height:1px;background:#939393;"></div>
<div class="t" style="left:1570.60px;top:587.60px;font:400 13px/13px 'Liberation Sans', sans-serif;color:#939393;letter-spacing:0.215px;">R$ 24.530,00</div>
<div class="b" style="left:279px;top:667px;width:1616px;height:296px;background:#1a1a1a;border:1px solid #2b2b2b;border-radius:6px;"></div>
<div class="t" style="left:304.00px;top:696.60px;font:700 16px/16px 'Liberation Serif', serif;color:#f2f2f2;letter-spacing:0.139px;">Ranking de Profissionais</div>
<div class="t" style="left:303.00px;top:743.00px;font:400 15px/15px 'Liberation Sans', sans-serif;color:#dadada;letter-spacing:-0.087px;">Pedro Almeida</div>
<div class="t" style="left:1778.10px;top:742.60px;font:400 15px/15px 'Liberation Sans', sans-serif;color:#939393;letter-spacing:0.161px;">R$ 30.710,00</div>
<div class="b" style="left:304px;top:764.0px;width:1566px;height:6.0px;background:#242424;border-radius:3px;"></div>
<div class="b" style="left:304px;top:764.0px;width:1566.0px;height:6.0px;background:#c9a441;border-radius:3px;"></div>
<div class="t" style="left:304.00px;top:785.00px;font:400 15px/15px 'Liberation Sans', sans-serif;color:#dadada;letter-spacing:-0.442px;">Ana Oliveira</div>
<div class="t" style="left:1773.60px;top:784.60px;font:400 15px/15px 'Liberation Sans', sans-serif;color:#939393;letter-spacing:0.570px;">R$ 30.640,00</div>
<div class="b" style="left:304px;top:806.0px;width:1566px;height:6.0px;background:#242424;border-radius:3px;"></div>
<div class="b" style="left:304px;top:806.0px;width:1562.4304786714426px;height:6.0px;background:#c9a441;border-radius:3px;"></div>
<div class="t" style="left:303.00px;top:827.00px;font:400 15px/15px 'Liberation Sans', sans-serif;color:#dadada;letter-spacing:-0.170px;">Rafael Costa</div>
<div class="t" style="left:1774.10px;top:826.60px;font:400 15px/15px 'Liberation Sans', sans-serif;color:#939393;letter-spacing:0.524px;">R$ 30.260,00</div>
<div class="b" style="left:304px;top:848.0px;width:1566px;height:6.0px;background:#242424;border-radius:3px;"></div>
<div class="b" style="left:304px;top:848.0px;width:1543.0530771735591px;height:6.0px;background:#c9a441;border-radius:3px;"></div>
<div class="t" style="left:304.00px;top:869.00px;font:400 15px/15px 'Liberation Sans', sans-serif;color:#dadada;letter-spacing:-0.390px;">Juliana Mendes</div>
<div class="t" style="left:1777.10px;top:868.60px;font:400 15px/15px 'Liberation Sans', sans-serif;color:#939393;letter-spacing:0.252px;">R$ 30.140,00</div>
<div class="b" style="left:304px;top:890.0px;width:1566px;height:6.0px;background:#242424;border-radius:3px;"></div>
<div class="b" style="left:304px;top:890.0px;width:1536.9338977531747px;height:6.0px;background:#c9a441;border-radius:3px;"></div>
<div class="t" style="left:304.00px;top:911.00px;font:400 15px/15px 'Liberation Sans', sans-serif;color:#dadada;letter-spacing:-0.471px;">Carlos Silva</div>
<div class="t" style="left:1772.60px;top:910.60px;font:400 15px/15px 'Liberation Sans', sans-serif;color:#939393;letter-spacing:0.661px;">R$ 30.090,00</div>
<div class="b" style="left:304px;top:932.0px;width:1566px;height:6.0px;background:#242424;border-radius:3px;"></div>
<div class="b" style="left:304px;top:932.0px;width:1534.3842396613481px;height:6.0px;background:#c9a441;border-radius:3px;"></div>
<div class="t" style="left:776.80px;top:1056.60px;font:400 13px/13px 'Liberation Sans', sans-serif;color:#8f8f8f;letter-spacing:-0.196px;">© 2026 Kronuz - Todos os direitos reservados</div>
<div class="t" style="left:1040.50px;top:1056.60px;font:400 13px/13px 'Liberation Sans', sans-serif;color:#8f8f8f;letter-spacing:0.000px;">|</div>
<div class="t" style="left:1052.80px;top:1056.60px;font:400 13px/13px 'Liberation Sans', sans-serif;color:#8f8f8f;letter-spacing:-0.058px;">CNPJ: 59.055.891/0001-26</div>
<div class="t" style="left:1216.00px;top:1056.60px;font:400 13px/13px 'Liberation Sans', sans-serif;color:#8f8f8f;letter-spacing:0.000px;">|</div>
<div class="t" style="left:1227.80px;top:1056.60px;font:400 13px/13px 'Liberation Sans', sans-serif;color:#8f8f8f;letter-spacing:0.118px;">Produto do grupo</div>
<div class="t" style="left:1332.50px;top:1056.60px;font:700 13px/13px 'Liberation Sans', sans-serif;color:#b8963c;letter-spacing:-0.538px;">Trinity Web</div>
</body></html>
